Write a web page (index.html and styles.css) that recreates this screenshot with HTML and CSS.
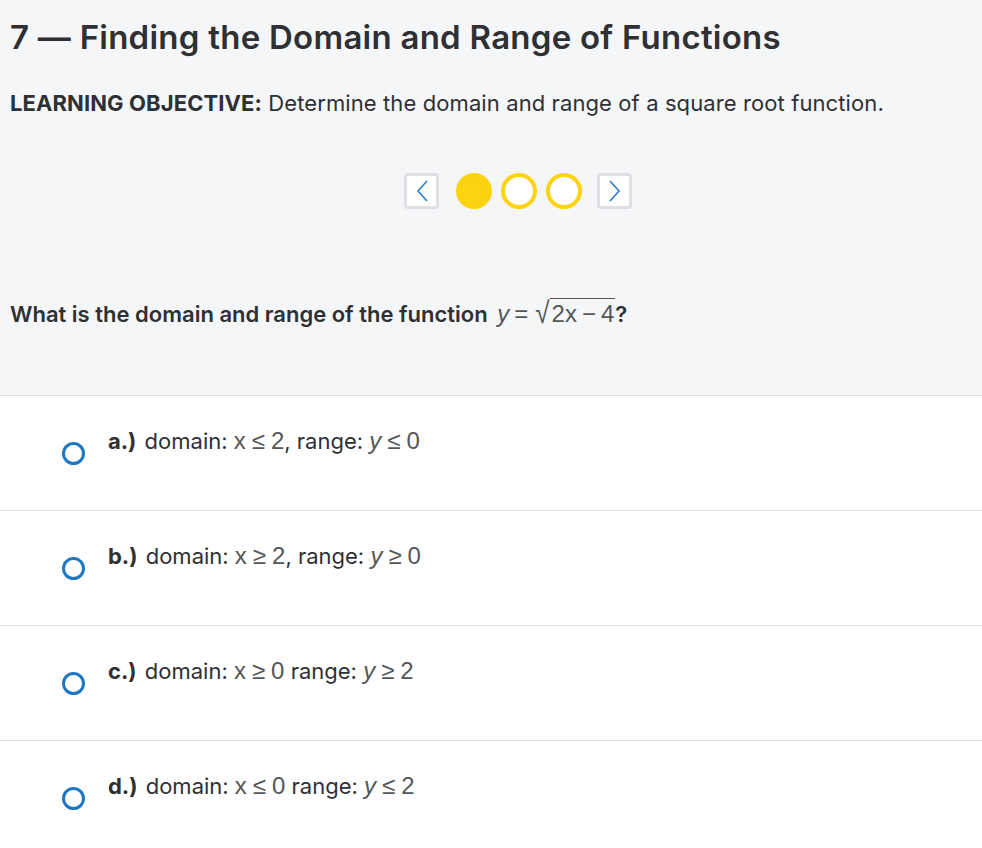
FILE: index.html
```
<!DOCTYPE html>
<html>
<head>
<meta charset="utf-8">
<link rel="stylesheet" href="styles.css">
</head>
<body>
<div class="top">
  <h1 class="title">7 — Finding the Domain and Range of Functions</h1>
  <p class="objective"><b>LEARNING OBJECTIVE:</b> Determine the domain and range of a square root function.</p>
  <div class="pager">
    <button class="nav"><svg width="14" height="24" viewBox="0 0 14 24"><path d="M12 2 L3 12 L12 22" fill="none" stroke="#2a7fd0" stroke-width="1.6"/></svg></button>
    <span class="dot filled"></span>
    <span class="dot"></span>
    <span class="dot"></span>
    <button class="nav"><svg width="14" height="24" viewBox="0 0 14 24"><path d="M2 2 L11 12 L2 22" fill="none" stroke="#2a7fd0" stroke-width="1.6"/></svg></button>
  </div>
  <p class="question">What is the domain and range of the function <span class="math q"><i>y</i><span class="op">=</span><span class="rad">√</span><span class="radicand">2<i class="up">x</i><span class="op">−</span>4</span></span>?</p>
</div>
<div class="options">
  <div class="option"><span class="radio"></span><span class="label"><b>a.)</b> domain: <span class="math">x<span class="op">≤</span>2</span>, range: <span class="math"><i>y</i><span class="op">≤</span>0</span></span></div>
  <div class="option"><span class="radio"></span><span class="label"><b>b.)</b> domain: <span class="math">x<span class="op">≥</span>2</span>, range: <span class="math"><i>y</i><span class="op">≥</span>0</span></span></div>
  <div class="option"><span class="radio"></span><span class="label"><b>c.)</b> domain: <span class="math">x<span class="op">≥</span>0</span> range: <span class="math"><i>y</i><span class="op">≥</span>2</span></span></div>
  <div class="option last"><span class="radio"></span><span class="label"><b>d.)</b> domain: <span class="math">x<span class="op">≤</span>0</span> range: <span class="math"><i>y</i><span class="op">≤</span>2</span></span></div>
</div>
</body>
</html>
```
FILE: styles.css
```
html, body {
  margin: 0;
  padding: 0;
  background: #ffffff;
}
body {
  font-family: Inter, "Noto Sans", sans-serif;
  color: #2f3033;
}
.top {
  background: #f5f6f8;
  border-bottom: 1px solid #dcdde0;
  padding: 17px 10px 0 10px;
  height: 396px;
  box-sizing: border-box;
}
.title {
  margin: 0;
  font-size: 33px;
  line-height: 40px;
  font-weight: 600;
  letter-spacing: 0.25px;
}
.objective {
  margin: 32px 0 0 0;
  font-size: 22px;
  line-height: 28px;
  font-weight: 400;
  letter-spacing: 0.1px;
}
.objective b {
  font-weight: 700;
}
.pager {
  display: flex;
  justify-content: center;
  align-items: center;
  gap: 9px;
  margin-top: 56px;
  padding-left: 54px;
}
.nav {
  width: 35px;
  height: 36px;
  box-sizing: border-box;
  border: 3px solid #dfe0e3;
  border-radius: 4px;
  background: #ffffff;
  padding: 0;
  display: flex;
  align-items: center;
  justify-content: center;
}
.nav:first-child { margin-right: 8px; }
.nav:last-child { margin-left: 6px; }
.dot {
  width: 36px;
  height: 36px;
  box-sizing: border-box;
  border-radius: 50%;
  border: 4px solid #fdd20e;
  background: #ffffff;
}
.dot.filled {
  background: #fdd20e;
}
.question {
  margin: 90px 0 0 0;
  font-size: 22px;
  line-height: 30px;
  font-weight: 600;
}
.math {
  font-family: "Liberation Sans", Arial, sans-serif;
  font-weight: 400;
  color: #555658;
  font-size: 24px;
  line-height: 1;
}
.math.q {
  margin-left: 4px;
}
.math i {
  font-style: italic;
}
.math .up { font-style: normal; }
.op {
  margin: 0 5px;
}
.rad {
  display: inline-block;
  transform: scaleY(1.15);
  font-size: 26px;
  margin: 0 0 0 2px;
}
.radicand {
  border-top: 1.5px solid #555658;
  padding: 1px 1px 0 2px;
}
.options {
  background: #ffffff;
}
.option {
  height: 115px;
  box-sizing: border-box;
  border-bottom: 1px solid #e3e4e6;
  display: flex;
  align-items: flex-start;
  padding-left: 62px;
}
.option.last { border-bottom: none; }
.radio {
  width: 23px;
  height: 23px;
  box-sizing: border-box;
  border: 3px solid #1d78c1;
  border-radius: 50%;
  margin-top: 46px;
  flex: none;
}
.label {
  margin-left: 23px;
  margin-top: 31px;
  font-size: 22px;
  line-height: 28px;
}
.label b {
  font-weight: 700;
  margin-right: 2px;
}
.label .math {
  font-size: 24px;
}
.label .op {
  margin: 0 6px;
}
```
